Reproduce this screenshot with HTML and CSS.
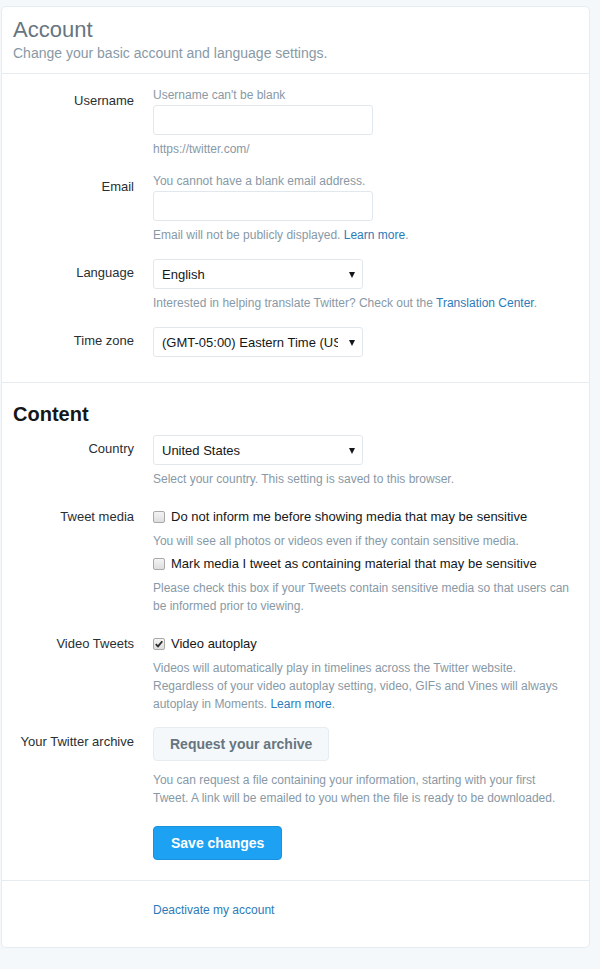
FILE: index.html
```html
<!DOCTYPE html>
<html lang="en">
<head>
<meta charset="utf-8">
<title>Account settings</title>
<link rel="stylesheet" href="styles.css">
</head>
<body>
<div class="card">
  <div class="header">
    <h1 class="title">Account</h1>
    <p class="subtitle">Change your basic account and language settings.</p>
  </div>

  <div class="section account">
    <div class="row">
      <label class="label">Username</label>
      <div class="controls">
        <div class="hint">Username can't be blank</div>
        <input class="text-input" type="text">
        <div class="help">https://twitter.com/</div>
      </div>
    </div>
    <div class="row">
      <label class="label">Email</label>
      <div class="controls">
        <div class="hint">You cannot have a blank email address.</div>
        <input class="text-input" type="text">
        <div class="help">Email will not be publicly displayed. <a class="link" href="#">Learn more</a>.</div>
      </div>
    </div>
    <div class="row">
      <label class="label">Language</label>
      <div class="controls">
        <div class="select-wrap"><select class="select"><option>English</option></select></div>
        <div class="help">Interested in helping translate Twitter? Check out the <a class="link" href="#">Translation Center</a>.</div>
      </div>
    </div>
    <div class="row">
      <label class="label">Time zone</label>
      <div class="controls">
        <div class="select-wrap"><select class="select"><option>(GMT-05:00) Eastern Time (US &amp; Canada)</option></select></div>
      </div>
    </div>
  </div>

  <div class="section content">
    <h2 class="section-title">Content</h2>
    <div class="row">
      <label class="label">Country</label>
      <div class="controls">
        <div class="select-wrap"><select class="select"><option>United States</option></select></div>
        <div class="help">Select your country. This setting is saved to this browser.</div>
      </div>
    </div>
    <div class="row checks">
      <label class="label">Tweet media</label>
      <div class="controls">
        <label class="check"><span class="box"></span>Do not inform me before showing media that may be sensitive</label>
        <div class="help">You will see all photos or videos even if they contain sensitive media.</div>
        <label class="check"><span class="box"></span>Mark media I tweet as containing material that may be sensitive</label>
        <div class="help">Please check this box if your Tweets contain sensitive media so that users can be informed prior to viewing.</div>
      </div>
    </div>
    <div class="row checks">
      <label class="label">Video Tweets</label>
      <div class="controls">
        <label class="check"><span class="box checked"><svg width="10" height="10" viewBox="0 0 10 10"><path d="M1.8 5.2 L4 7.4 L8.3 2.2" fill="none" stroke="#2b2b2b" stroke-width="1.8"/></svg></span>Video autoplay</label>
        <div class="help">Videos will automatically play in timelines across the Twitter website.<br>Regardless of your video autoplay setting, video, GIFs and Vines will always autoplay in Moments. <a class="link" href="#">Learn more</a>.</div>
      </div>
    </div>
    <div class="row">
      <label class="label">Your Twitter archive</label>
      <div class="controls">
        <button class="btn" type="button">Request your archive</button>
        <div class="help archive-help">You can request a file containing your information, starting with your first Tweet. A link will be emailed to you when the file is ready to be downloaded.</div>
        <button class="btn primary" type="button">Save changes</button>
      </div>
    </div>
  </div>

  <div class="section footer">
    <div class="row">
      <span class="label"></span>
      <div class="controls">
        <a class="link deactivate" href="#">Deactivate my account</a>
      </div>
    </div>
  </div>
</div>
</body>
</html>
```

FILE: styles.css
```css
html, body {
  margin: 0;
  background: #f5f8fa;
}
body {
  padding: 6px 0 0 1px;
  font-family: "Liberation Sans", Arial, sans-serif;
  color: #14171a;
}
.card {
  width: 589px;
  box-sizing: border-box;
  background: #fff;
  border: 1px solid #e6ecf0;
  border-radius: 5px;
}
.header {
  padding: 9px 11px 10px;
  border-bottom: 1px solid #e6ecf0;
}
.title {
  margin: 0;
  font-size: 22px;
  line-height: 27px;
  font-weight: normal;
  color: #66757f;
}
.subtitle {
  margin: 0;
  font-size: 14px;
  line-height: 20px;
  color: #8899a6;
}
.section {
  padding-right: 6px;
}
.account {
  padding-top: 12px;
  padding-bottom: 25px;
  border-bottom: 1px solid #e6ecf0;
}
.content {
  padding-top: 19px;
  padding-bottom: 20px;
  border-bottom: 1px solid #e6ecf0;
}
.footer {
  padding-top: 20px;
  padding-bottom: 28px;
}
.section-title {
  margin: 0 0 8px 11px;
  font-size: 20px;
  line-height: 24px;
  font-weight: bold;
  color: #14171a;
}
.row {
  display: grid;
  grid-template-columns: 132px 1fr;
  column-gap: 19px;
  margin-bottom: 14px;
}
.row:last-child {
  margin-bottom: 0;
}
.row.checks {
  margin-bottom: 14px;
}
.label {
  text-align: right;
  padding-top: 6px;
  font-size: 13px;
  line-height: 18px;
  color: #292f33;
}
.controls {
  display: flex;
  flex-direction: column;
  align-items: flex-start;
  font-size: 12px;
  line-height: 18px;
  min-width: 0;
}
.hint {
  color: #8899a6;
}
.help {
  color: #8899a6;
  margin-top: 5px;
}
.link {
  color: #2b7bb9;
  text-decoration: none;
}
.text-input {
  display: block;
  margin: 1px 0 0;
  width: 220px;
  height: 30px;
  box-sizing: border-box;
  border: 1px solid #e1e8ed;
  border-radius: 3px;
  background: #fff;
  padding: 0 8px;
  font: 13px "Liberation Sans", Arial, sans-serif;
}
.select-wrap {
  position: relative;
  margin-top: 1px;
}
.select-wrap::after {
  content: "";
  position: absolute;
  right: 8px;
  top: 13px;
  border-left: 3px solid transparent;
  border-right: 3px solid transparent;
  border-top: 6px solid #14171a;
  pointer-events: none;
}
.select {
  display: block;
  -webkit-appearance: none;
  appearance: none;
  width: 210px;
  height: 30px;
  box-sizing: border-box;
  border: 1px solid #e1e8ed;
  border-radius: 3px;
  background: #fff;
  padding: 0 24px 0 8px;
  font: 13px "Liberation Sans", Arial, sans-serif;
  color: #14171a;
  overflow: hidden;
}
.check {
  display: flex;
  align-items: center;
  font-size: 13px;
  line-height: 18px;
  color: #14171a;
  margin-top: 5px;
}
.check:first-child {
  margin-top: 6px;
}
.check + .help {
  margin-top: 6px;
}
.box {
  display: inline-flex;
  align-items: center;
  justify-content: center;
  width: 12px;
  height: 12px;
  box-sizing: border-box;
  margin-right: 6px;
  border: 1px solid #a9a9a9;
  border-radius: 2px;
  background: linear-gradient(#f4f4f4, #dedede);
}
.box svg {
  display: block;
}
.btn {
  display: block;
  margin-top: 0;
  height: 34px;
  padding: 0 16px;
  box-sizing: border-box;
  border: 1px solid #e6ecf0;
  border-radius: 4px;
  background: #f5f8fa;
  font: bold 14px "Liberation Sans", Arial, sans-serif;
  color: #66757f;
}
.archive-help {
  margin-top: 10px;
  width: 410px;
}
.btn.primary {
  margin-top: 19px;
  padding: 0 17px;
  background: #1da1f2;
  border-color: #1a91da;
  color: #fff;
}
.deactivate {
  font-size: 12px;
  line-height: 18px;
}
```
